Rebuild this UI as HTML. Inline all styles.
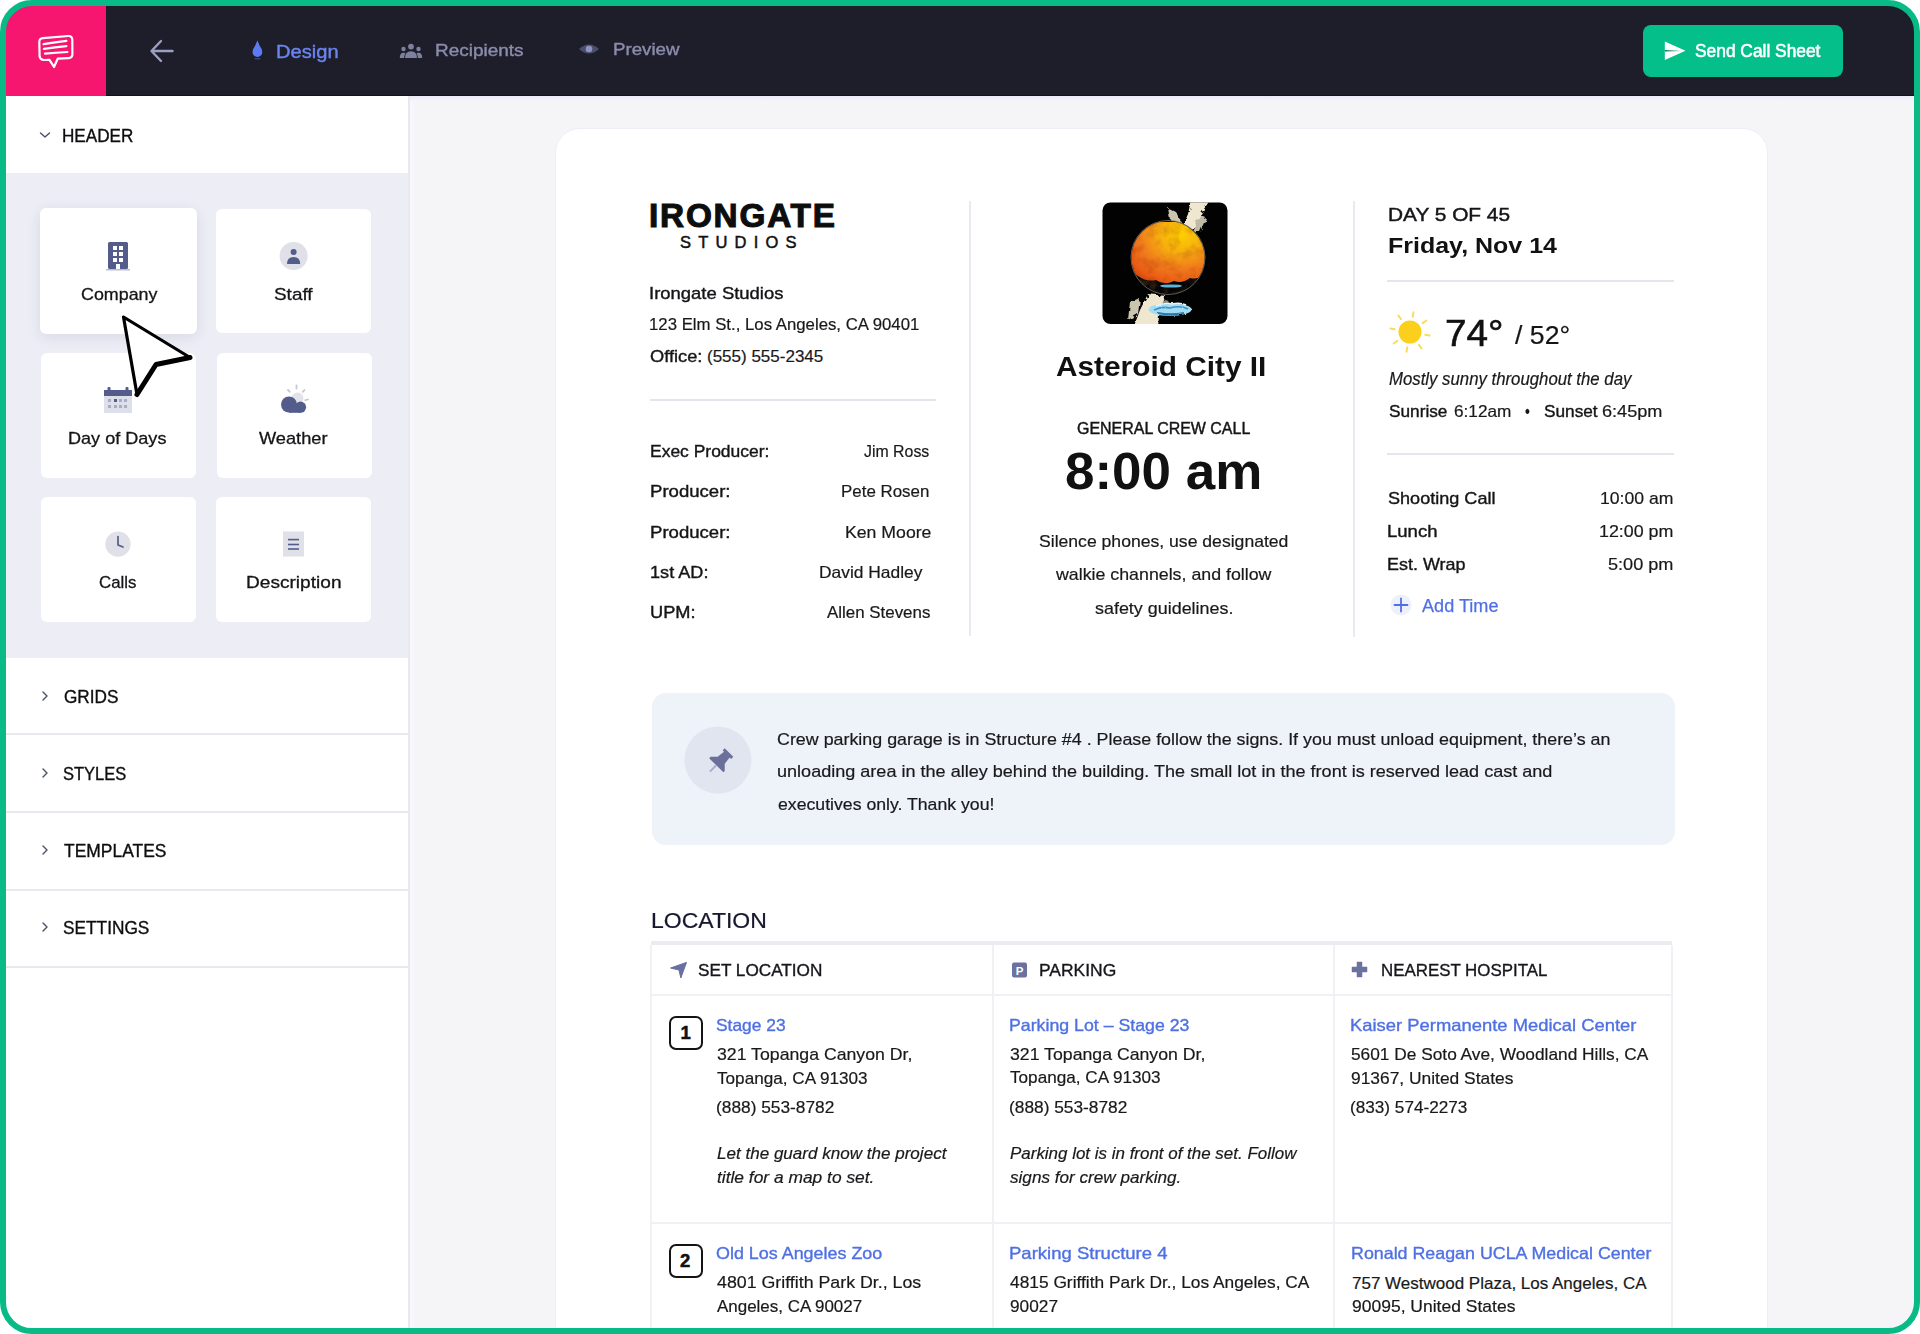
<!DOCTYPE html>
<html>
<head>
<meta charset="utf-8">
<style>
html,body{margin:0;padding:0;width:1920px;height:1334px;overflow:hidden;background:#ffffff;}
body{font-family:"Liberation Sans",sans-serif;}
#app{position:absolute;left:0;top:0;width:1920px;height:1334px;overflow:hidden;clip-path:inset(2px round 30px);background:#f5f5f8;}
.b{position:absolute;box-sizing:border-box;}
.t{position:absolute;white-space:nowrap;line-height:1;transform-origin:0 0;}
svg{position:absolute;overflow:visible;}
#frame{position:absolute;left:0;top:0;width:1920px;height:1334px;box-sizing:border-box;border:6px solid #08bb86;border-radius:32px;pointer-events:none;}
</style>
</head>
<body>
<div id="app">
<div class='b' style='left:0px;top:96px;width:408px;height:1238px;background:#ffffff;border-radius:0px;'></div>
<div class='b' style='left:408px;top:96px;width:2px;height:1238px;background:#e8e8f0;border-radius:0px;'></div>
<div class='b' style='left:410px;top:96px;width:6px;height:1238px;background:linear-gradient(90deg,#f9f8fd,#f5f5f8);border-radius:0px;'></div>
<div class='b' style='left:0px;top:173px;width:408px;height:485px;background:#ecedf5;border-radius:0px;'></div>
<div class='b' style='left:0px;top:733px;width:408px;height:2px;background:#e8e9ef;border-radius:0px;'></div>
<div class='b' style='left:0px;top:811px;width:408px;height:2px;background:#e8e9ef;border-radius:0px;'></div>
<div class='b' style='left:0px;top:889px;width:408px;height:2px;background:#e8e9ef;border-radius:0px;'></div>
<div class='b' style='left:0px;top:966px;width:408px;height:2px;background:#e8e9ef;border-radius:0px;'></div>
<div class='b' style='left:40px;top:208px;width:157px;height:126px;background:#ffffff;border-radius:6px;box-shadow:0 3px 14px rgba(40,45,80,0.10);'></div>
<div class='b' style='left:216px;top:209px;width:155px;height:124px;background:#ffffff;border-radius:6px;'></div>
<div class='b' style='left:41px;top:353px;width:155px;height:125px;background:#ffffff;border-radius:6px;'></div>
<div class='b' style='left:217px;top:353px;width:155px;height:125px;background:#ffffff;border-radius:6px;'></div>
<div class='b' style='left:41px;top:497px;width:155px;height:125px;background:#ffffff;border-radius:6px;'></div>
<div class='b' style='left:216px;top:497px;width:155px;height:125px;background:#ffffff;border-radius:6px;'></div>
<svg style='left:38px;top:128px' width='14' height='12' viewBox='0 0 14 12'><path d='M2.5 5 L7 9 L11.5 5' fill='none' stroke='#4a5160' stroke-width='1.4' stroke-linecap='round' stroke-linejoin='round'/></svg>
<svg style='left:40px;top:689px' width='10' height='14' viewBox='0 0 10 14'><path d='M3 3 L7 7 L3 11' fill='none' stroke='#4a5160' stroke-width='1.4' stroke-linecap='round' stroke-linejoin='round'/></svg>
<svg style='left:40px;top:766px' width='10' height='14' viewBox='0 0 10 14'><path d='M3 3 L7 7 L3 11' fill='none' stroke='#4a5160' stroke-width='1.4' stroke-linecap='round' stroke-linejoin='round'/></svg>
<svg style='left:40px;top:843px' width='10' height='14' viewBox='0 0 10 14'><path d='M3 3 L7 7 L3 11' fill='none' stroke='#4a5160' stroke-width='1.4' stroke-linecap='round' stroke-linejoin='round'/></svg>
<svg style='left:40px;top:920px' width='10' height='14' viewBox='0 0 10 14'><path d='M3 3 L7 7 L3 11' fill='none' stroke='#4a5160' stroke-width='1.4' stroke-linecap='round' stroke-linejoin='round'/></svg>
<svg style='left:104px;top:240px' width='30' height='32' viewBox='0 0 30 32'>
<rect x='4' y='2' width='20' height='27' rx='1.5' fill='#535c8a'/>
<rect x='9' y='6' width='4' height='4' fill='#fff'/><rect x='15' y='6' width='4' height='4' fill='#fff'/>
<rect x='9' y='12' width='4' height='4' fill='#fff'/><rect x='15' y='12' width='4' height='4' fill='#fff'/>
<rect x='9' y='18' width='4' height='4' fill='#fff'/><rect x='15' y='18' width='4' height='4' fill='#fff'/>
<rect x='12' y='24' width='4' height='5' fill='#fff'/>
<rect x='2' y='29' width='24' height='1.5' fill='#b9bfd6'/>
</svg>
<svg style='left:279px;top:242px' width='30' height='30' viewBox='0 0 30 30'>
<circle cx='14.6' cy='14' r='14' fill='#dfe0e8'/>
<circle cx='14.6' cy='10' r='3' fill='#535c8a'/>
<path d='M8 22 Q8 15 14.6 15 Q21.2 15 21.2 22 Z' fill='#535c8a'/>
</svg>
<svg style='left:103px;top:385px' width='30' height='30' viewBox='0 0 30 30'>
<rect x='1' y='5' width='28' height='23' fill='#dde0ea'/>
<rect x='1' y='5' width='28' height='6' fill='#535c8a'/>
<rect x='4.5' y='2' width='3' height='4' rx='1' fill='#535c8a'/>
<rect x='22.5' y='2' width='3' height='4' rx='1' fill='#535c8a'/>
<g fill='#a8acc4'><rect x='5' y='14' width='3' height='3'/><rect x='11' y='14' width='3' height='3' fill='#535c8a'/><rect x='16' y='14' width='3' height='3'/><rect x='21' y='14' width='3' height='3'/>
<rect x='5' y='20' width='3' height='3'/><rect x='11' y='20' width='3' height='3'/><rect x='16' y='20' width='3' height='3'/><rect x='21' y='20' width='3' height='3'/></g>
</svg>
<svg style='left:278px;top:382px' width='34' height='34' viewBox='0 0 34 34'>
<circle cx='19.5' cy='16.5' r='6' fill='#e3e4eb'/>
<g stroke='#c5c7d1' stroke-width='1.8' stroke-linecap='round'>
<line x1='18.5' y1='3.5' x2='18.5' y2='6.5'/><line x1='10' y1='8' x2='11.8' y2='9.8'/><line x1='26.5' y1='8' x2='24.8' y2='9.8'/><line x1='30' y1='17.5' x2='27.3' y2='18.2'/></g>
<g fill='#535c8a'><circle cx='11' cy='22.5' r='8'/><circle cx='22.5' cy='25.2' r='5.6'/><rect x='11' y='22' width='11.5' height='8.8'/></g>
</svg>
<svg style='left:104px;top:530px' width='28' height='28' viewBox='0 0 28 28'>
<circle cx='14' cy='14.2' r='12.6' fill='#dfe0e8'/>
<path d='M14 6.5 V15 L19 17' fill='none' stroke='#535c8a' stroke-width='1.7' stroke-linecap='round' stroke-linejoin='round'/>
</svg>
<svg style='left:282px;top:531px' width='24' height='27' viewBox='0 0 24 27'>
<rect x='1' y='0.5' width='21' height='25' fill='#dfe0e8'/>
<g stroke='#535c8a' stroke-width='1.6'><line x1='6' y1='8.6' x2='17' y2='8.6'/><line x1='6' y1='13.5' x2='17' y2='13.5'/><line x1='6' y1='18' x2='17' y2='18'/></g>
</svg>
<div class='b' style='left:0px;top:0px;width:1920px;height:96px;background:#1e1e2b;border-radius:0px;'></div>
<div class='b' style='left:0px;top:94.5px;width:1920px;height:1.5px;background:#121219;border-radius:0px;'></div>
<div class='b' style='left:0px;top:0px;width:106px;height:96px;background:#f6166f;border-radius:0px;'></div>
<svg style='left:36px;top:32px' width='40' height='40' viewBox='0 0 40 40'>
<path d='M7 6.2 Q3.2 6.5 3.3 10 L3.6 24.2 Q3.9 28 8 28 L13.5 27.8 L18 35 L21.7 26.7 L32.5 26.1 Q36.5 25.9 36.4 22 L36.3 7.6 Q36.2 3.9 32.4 4 Z' fill='none' stroke='#fff' stroke-width='2.2' stroke-linejoin='round'/>
<g stroke='#fff' stroke-width='2.2' stroke-linecap='round' fill='none'>
<path d='M7.6 12.2 Q19 10.2 30.4 8.8'/><path d='M7.9 16.8 Q19 15.1 30.4 14.1'/><path d='M9 21.6 Q20 20.6 31.4 20'/></g>
</svg>
<svg style='left:148px;top:38px' width='28' height='26' viewBox='0 0 28 26'>
<g fill='none' stroke='#9c9ec2' stroke-width='2.4' stroke-linecap='round' stroke-linejoin='round'>
<path d='M13 3 L3.5 13 L13 23'/><path d='M4.5 13 H24.5'/></g>
</svg>
<svg style='left:249px;top:38px' width='16' height='24' viewBox='0 0 16 24'>
<path d='M8.4 2.5 Q6.8 6 6 8 Q3.5 11 3.5 14 A4.9 4.9 0 0 0 13.3 14 Q13.3 11 10.8 8 Q10 6 8.4 2.5 Z' fill='#5d7af5'/>
<rect x='5.5' y='20' width='6' height='1.5' rx='0.7' fill='#3b4470'/>
</svg>
<svg style='left:399px;top:42.5px' width='26' height='18' viewBox='0 0 26 18'>
<g fill='#7e809f'>
<circle cx='12' cy='3.6' r='2.9'/><circle cx='4.5' cy='6' r='2.2'/><circle cx='19.5' cy='6' r='2.2'/>
<path d='M6 15 Q6 8.3 12 8.3 Q18 8.3 18 15 Z'/>
<path d='M0.8 15 Q0.8 9.8 4.6 9.8 Q6 9.8 6.5 10.3 Q5 12.2 5 15 Z'/>
<path d='M23.2 15 Q23.2 9.8 19.4 9.8 Q18 9.8 17.5 10.3 Q19 12.2 19 15 Z'/></g>
</svg>
<svg style='left:577px;top:41px' width='24' height='16' viewBox='0 0 24 16'>
<path d='M2 8 Q12 -1 22 8 Q12 17 2 8 Z' fill='#4b4e6a'/>
<circle cx='12' cy='8' r='3.3' fill='#8e93c0'/>
</svg>
<div class='b' style='left:1643px;top:25px;width:200px;height:52px;background:#04bf8a;border-radius:8px;'></div>
<svg style='left:1662px;top:40px' width='26' height='22' viewBox='0 0 26 22'>
<defs><linearGradient id='pl' gradientUnits='userSpaceOnUse' x1='2.8' y1='0' x2='19.5' y2='0'><stop offset='0' stop-color='#0a7f5a'/><stop offset='1' stop-color='#ffffff'/></linearGradient></defs>
<path d='M2.8 1.6 L23.5 10.8 L2.8 20 Z' fill='#fff'/>
<path d='M2.8 10.8 H19.5' stroke='url(#pl)' stroke-width='1.4'/>
</svg>
<div class='b' style='left:555px;top:128px;width:1213px;height:1302px;background:#ffffff;border-radius:25px;border:1px solid #eceef5;'></div>
<div class='b' style='left:410px;top:96px;width:1504px;height:5px;background:linear-gradient(#eceaf6,#f5f5f8);border-radius:0px;'></div>
<div class='b' style='left:650px;top:399px;width:286px;height:2px;background:#e4e6ed;border-radius:0px;'></div>
<div class='b' style='left:968.5px;top:201px;width:2px;height:435px;background:#e9eaf1;border-radius:0px;'></div>
<div class='b' style='left:1352.5px;top:201px;width:2px;height:436px;background:#e9eaf1;border-radius:0px;'></div>
<div class='b' style='left:1387px;top:279.5px;width:287px;height:2px;background:#e4e6ed;border-radius:0px;'></div>
<div class='b' style='left:1387px;top:453px;width:287px;height:2px;background:#e4e6ed;border-radius:0px;'></div>
<div class='t' style='left:649px;top:198.5px;font-size:33.3px;font-weight:700;color:#0d0d0d;letter-spacing:1.8px;-webkit-text-stroke:1.1px #0d0d0d;'>IRONGATE</div>
<div class='t' style='left:680px;top:234px;font-size:16.5px;font-weight:400;color:#111;-webkit-text-stroke:0.5px #111;letter-spacing:7.2px;'>STUDIOS</div>
<svg style='left:1102px;top:202px' width='126' height='122' viewBox='0 0 126 122'>
<defs>
<radialGradient id='pg' cx='0.68' cy='0.2' r='0.95'>
<stop offset='0' stop-color='#fcd000'/><stop offset='0.3' stop-color='#f7b00e'/><stop offset='0.6' stop-color='#f07a1c'/><stop offset='0.85' stop-color='#e95a14'/><stop offset='1' stop-color='#b83c0c'/></radialGradient>
<clipPath id='pc'><rect x='0.5' y='0.5' width='125' height='121.5' rx='8'/></clipPath>
<clipPath id='planet'><circle cx='66' cy='55.5' r='36.5'/></clipPath>
<filter id='rough' x='-20%' y='-20%' width='140%' height='140%'><feTurbulence type='fractalNoise' baseFrequency='0.18' numOctaves='2' seed='3'/><feDisplacementMap in='SourceGraphic' scale='6'/></filter>
<filter id='mott'><feTurbulence type='fractalNoise' baseFrequency='0.09' numOctaves='3' seed='7'/><feColorMatrix values='0 0 0 0 0.45  0 0 0 0 0.15  0 0 0 0 0.02  0 0 0 -2.2 1.25'/></filter>
</defs>
<g clip-path='url(#pc)'>
<rect x='0' y='0' width='126' height='122' fill='#020202'/>
<g filter='url(#rough)' fill='#efe7cf'>
<path d='M89 -2 L108 -2 L100 10 L92 24 L84 32 L80 26 L86 12 Z'/>
<path d='M66 6 L74 10 L80 22 L74 28 L68 18 Z' opacity='0.85'/>
<path d='M96 12 L104 16 L98 30 L90 30 Z' opacity='0.8'/>
<path d='M46 92 L64 94 L58 106 L56 124 L32 124 L38 108 Z'/>
<path d='M28 100 L38 96 L36 112 L26 118 Z' opacity='0.85'/>
<path d='M60 98 L68 100 L64 112 L58 110 Z' opacity='0.6'/>
</g>
<circle cx='66' cy='55.5' r='37' fill='#050505' stroke='#6d6a66' stroke-width='0.9'/>
<g clip-path='url(#planet)'>
<path d='M28 20 L104 20 L104 72 Q96 78 88 76 Q80 82 72 79 Q62 84 54 78 Q44 80 36 74 L28 70 Z' fill='url(#pg)'/>
<rect x='28' y='18' width='80' height='66' fill='#000' filter='url(#mott)' opacity='0.35' style='mix-blend-mode:multiply'/>
</g>
<ellipse cx='69' cy='84' rx='11' ry='1.6' fill='#5fb4dc'/>
<filter id='rough2' x='-20%' y='-50%' width='140%' height='200%'><feTurbulence type='fractalNoise' baseFrequency='0.35' numOctaves='1' seed='5'/><feDisplacementMap in='SourceGraphic' scale='2.5'/></filter>
<g filter='url(#rough2)'>
<ellipse cx='68' cy='107.5' rx='21.5' ry='6.3' fill='#a3dcf0'/>
<path d='M52 108 Q60 104 68 106 Q78 103 86 107' stroke='#3f93c6' stroke-width='1.6' fill='none'/>
<path d='M54 104 Q62 100 70 102 Q78 100 84 103' stroke='#e8f7fc' stroke-width='1.4' fill='none'/>
<path d='M56 111 Q68 113.5 82 111' stroke='#2a78b0' stroke-width='2' fill='none'/>
</g>
</g>
</svg>
<svg style='left:1389px;top:310.5px' width='42' height='42' viewBox='0 0 42 42'>
<circle cx='21' cy='21' r='11.5' fill='#fbcf1c'/>
<g stroke='#f8dc60' stroke-width='2' stroke-linecap='round'><line x1='36.3' y1='23.7' x2='40.7' y2='24.5'/><line x1='29.9' y1='33.7' x2='32.5' y2='37.4'/><line x1='18.3' y1='36.3' x2='17.5' y2='40.7'/><line x1='8.3' y1='29.9' x2='4.6' y2='32.5'/><line x1='5.7' y1='18.3' x2='1.3' y2='17.5'/><line x1='12.1' y1='8.3' x2='9.5' y2='4.6'/><line x1='23.7' y1='5.7' x2='24.5' y2='1.3'/><line x1='33.7' y1='12.1' x2='37.4' y2='9.5'/></g>
</svg>
<svg style='left:1390px;top:594px' width='22' height='22' viewBox='0 0 22 22'>
<circle cx='11' cy='11' r='10.5' fill='#eef1fb'/>
<g stroke='#4f70e3' stroke-width='1.8' stroke-linecap='round'><line x1='11' y1='4.5' x2='11' y2='17.5'/><line x1='4.5' y1='11' x2='17.5' y2='11'/></g>
</svg>
<div class='b' style='left:652px;top:693px;width:1023px;height:152px;background:#eef2f9;border-radius:14px;'></div>
<svg style='left:684px;top:726px' width='68' height='68' viewBox='0 0 68 68'>
<circle cx='34' cy='34' r='33.5' fill='#e1e5ef'/>
<g transform='translate(36.5 35) rotate(45)'>
<path d='M-6 -12 H6 V-9 H4 L5 -1 L10 4 V6 H-10 V4 L-5 -1 L-4 -9 H-6 Z' fill='#6a7099'/>
<rect x='-1' y='6' width='2' height='9' fill='#a9aecb'/>
</g>
</svg>
<div class='b' style='left:651px;top:941px;width:1021px;height:4px;background:#ebecf2;border-radius:0px;'></div>
<div class='b' style='left:650px;top:945px;width:2px;height:400px;background:#f0f1f5;border-radius:0px;'></div>
<div class='b' style='left:992px;top:945px;width:2px;height:400px;background:#f0f1f5;border-radius:0px;'></div>
<div class='b' style='left:1333px;top:945px;width:2px;height:400px;background:#f0f1f5;border-radius:0px;'></div>
<div class='b' style='left:1671px;top:945px;width:2px;height:400px;background:#f0f1f5;border-radius:0px;'></div>
<div class='b' style='left:651px;top:994px;width:1021px;height:2px;background:#f0f1f5;border-radius:0px;'></div>
<div class='b' style='left:651px;top:1222px;width:1021px;height:2px;background:#f0f1f5;border-radius:0px;'></div>
<div class='b' style='left:668.5px;top:1015.5px;width:34.5px;height:34px;background:transparent;border-radius:7px;border:2px solid #141414;'></div>
<div class='b' style='left:668.5px;top:1244px;width:34.5px;height:34px;background:transparent;border-radius:7px;border:2px solid #141414;'></div>
<svg style='left:668px;top:960px' width='22' height='22' viewBox='0 0 22 22'><path d='M2.6 8 L18.5 2.4 L12.8 18 L11 10 Z' fill='#6770a0' stroke='#6770a0' stroke-width='1' stroke-linejoin='round'/></svg>
<svg style='left:1011px;top:961px' width='18' height='18' viewBox='0 0 18 18'>
<rect x='1' y='1.5' width='15' height='15' rx='2' fill='#6b72a0'/>
<text x='8.5' y='13.6' font-family='Liberation Sans' font-weight='700' font-size='11.5' fill='#fff' text-anchor='middle'>P</text>
</svg>
<svg style='left:1350px;top:960px' width='20' height='20' viewBox='0 0 20 20'><path d='M7 2 H12 V7 H17 V12 H12 V17 H7 V12 H2 V7 H7 Z' fill='#6b72a0' stroke='#6b72a0' stroke-width='0.5' stroke-linejoin='round'/></svg>
<div class='t' id='t0' style='left:276.00px;top:43.04px;font-size:18.5px;font-weight:400;color:#6b86f2;-webkit-text-stroke:0.38px #6b86f2;transform:scaleX(1.0871);'>Design</div>
<div class='t' id='t1' style='left:435.00px;top:43.25px;font-size:16.6px;font-weight:400;color:#8b8dac;-webkit-text-stroke:0.38px #8b8dac;transform:scaleX(1.1424);'>Recipients</div>
<div class='t' id='t2' style='left:613.01px;top:42.45px;font-size:16.6px;font-weight:400;color:#8b8dac;-webkit-text-stroke:0.38px #8b8dac;transform:scaleX(1.1267);'>Preview</div>
<div class='t' id='t3' style='left:1695.00px;top:42.26px;font-size:18px;font-weight:400;color:#ffffff;-webkit-text-stroke:0.55px #ffffff;transform:scaleX(0.9641);'>Send Call Sheet</div>
<div class='t' id='t4' style='left:62.01px;top:127.69px;font-size:17.5px;font-weight:400;color:#0e0e10;-webkit-text-stroke:0.35px #0e0e10;transform:scaleX(0.9786);'>HEADER</div>
<div class='t' id='t5' style='left:81.00px;top:286.11px;font-size:17px;font-weight:400;color:#151518;-webkit-text-stroke:0.3px #151518;transform:scaleX(1.0510);'>Company</div>
<div class='t' id='t6' style='left:274.04px;top:286.11px;font-size:17px;font-weight:400;color:#151518;-webkit-text-stroke:0.3px #151518;transform:scaleX(1.1131);'>Staff</div>
<div class='t' id='t7' style='left:68.00px;top:430.31px;font-size:17px;font-weight:400;color:#151518;-webkit-text-stroke:0.3px #151518;transform:scaleX(1.0632);'>Day of Days</div>
<div class='t' id='t8' style='left:259.01px;top:430.31px;font-size:17px;font-weight:400;color:#151518;-webkit-text-stroke:0.3px #151518;transform:scaleX(1.0713);'>Weather</div>
<div class='t' id='t9' style='left:99.01px;top:573.51px;font-size:17px;font-weight:400;color:#151518;-webkit-text-stroke:0.3px #151518;transform:scaleX(0.9887);'>Calls</div>
<div class='t' id='t10' style='left:245.99px;top:573.51px;font-size:17px;font-weight:400;color:#151518;-webkit-text-stroke:0.3px #151518;transform:scaleX(1.1233);'>Description</div>
<div class='t' id='t11' style='left:63.61px;top:688.99px;font-size:17.5px;font-weight:400;color:#0e0e10;-webkit-text-stroke:0.35px #0e0e10;transform:scaleX(0.9811);'>GRIDS</div>
<div class='t' id='t12' style='left:62.60px;top:766.29px;font-size:17.5px;font-weight:400;color:#0e0e10;-webkit-text-stroke:0.35px #0e0e10;transform:scaleX(0.9433);'>STYLES</div>
<div class='t' id='t13' style='left:63.60px;top:843.49px;font-size:17.5px;font-weight:400;color:#0e0e10;-webkit-text-stroke:0.35px #0e0e10;transform:scaleX(0.9965);'>TEMPLATES</div>
<div class='t' id='t14' style='left:62.60px;top:919.79px;font-size:17.5px;font-weight:400;color:#0e0e10;-webkit-text-stroke:0.35px #0e0e10;transform:scaleX(0.9870);'>SETTINGS</div>
<div class='t' id='t15' style='left:649.00px;top:284.61px;font-size:17px;font-weight:400;color:#151518;-webkit-text-stroke:0.38px #151518;transform:scaleX(1.0861);'>Irongate Studios</div>
<div class='t' id='t16' style='left:649.00px;top:316.21px;font-size:17px;font-weight:400;color:#19191c;-webkit-text-stroke:0.2px #19191c;transform:scaleX(0.9864);'>123 Elm St., Los Angeles, CA 90401</div>
<div class='t' id='t17' style='left:650.00px;top:347.51px;font-size:17px;font-weight:400;color:#151518;-webkit-text-stroke:0.38px #151518;transform:scaleX(1.0744);'>Office:</div>
<div class='t' id='t18' style='left:707.00px;top:347.51px;font-size:17px;font-weight:400;color:#19191c;-webkit-text-stroke:0.2px #19191c;'>(555) 555-2345</div>
<div class='t' id='t19' style='left:649.99px;top:443.03px;font-size:16.5px;font-weight:400;color:#151518;-webkit-text-stroke:0.38px #151518;transform:scaleX(1.0584);'>Exec Producer:</div>
<div class='t' id='t20' style='left:864.00px;top:443.03px;font-size:16.5px;font-weight:400;color:#19191c;-webkit-text-stroke:0.2px #19191c;transform:scaleX(0.9623);'>Jim Ross</div>
<div class='t' id='t21' style='left:649.99px;top:483.43px;font-size:16.5px;font-weight:400;color:#151518;-webkit-text-stroke:0.38px #151518;transform:scaleX(1.1250);'>Producer:</div>
<div class='t' id='t22' style='left:841.00px;top:483.43px;font-size:16.5px;font-weight:400;color:#19191c;-webkit-text-stroke:0.2px #19191c;transform:scaleX(1.0246);'>Pete Rosen</div>
<div class='t' id='t23' style='left:649.99px;top:523.73px;font-size:16.5px;font-weight:400;color:#151518;-webkit-text-stroke:0.38px #151518;transform:scaleX(1.1250);'>Producer:</div>
<div class='t' id='t24' style='left:845.01px;top:523.73px;font-size:16.5px;font-weight:400;color:#19191c;-webkit-text-stroke:0.2px #19191c;transform:scaleX(1.0706);'>Ken Moore</div>
<div class='t' id='t25' style='left:649.99px;top:564.03px;font-size:16.5px;font-weight:400;color:#151518;-webkit-text-stroke:0.38px #151518;transform:scaleX(1.0988);'>1st AD:</div>
<div class='t' id='t26' style='left:819.01px;top:564.03px;font-size:16.5px;font-weight:400;color:#19191c;-webkit-text-stroke:0.2px #19191c;transform:scaleX(1.0536);'>David Hadley</div>
<div class='t' id='t27' style='left:649.98px;top:604.03px;font-size:16.5px;font-weight:400;color:#151518;-webkit-text-stroke:0.38px #151518;transform:scaleX(1.1031);'>UPM:</div>
<div class='t' id='t28' style='left:827.00px;top:604.03px;font-size:16.5px;font-weight:400;color:#19191c;-webkit-text-stroke:0.2px #19191c;transform:scaleX(1.0243);'>Allen Stevens</div>
<div class='t' id='t29' style='left:1056.00px;top:352.37px;font-size:28.5px;font-weight:700;color:#111;transform:scaleX(1.0460);'>Asteroid City II</div>
<div class='t' id='t30' style='left:1077.00px;top:420.03px;font-size:16.5px;font-weight:400;color:#151518;-webkit-text-stroke:0.45px #151518;transform:scaleX(0.9675);'>GENERAL CREW CALL</div>
<div class='t' id='t31' style='left:1065.40px;top:446.01px;font-size:51.5px;font-weight:700;color:#111;transform:scaleX(1.0282);'>8:00 am</div>
<div class='t' id='t32' style='left:1039.00px;top:532.61px;font-size:17px;font-weight:400;color:#19191c;-webkit-text-stroke:0.2px #19191c;transform:scaleX(1.0348);'>Silence phones, use designated</div>
<div class='t' id='t33' style='left:1056.00px;top:565.61px;font-size:17px;font-weight:400;color:#19191c;-webkit-text-stroke:0.2px #19191c;transform:scaleX(1.0457);'>walkie channels, and follow</div>
<div class='t' id='t34' style='left:1095.40px;top:599.61px;font-size:17px;font-weight:400;color:#19191c;-webkit-text-stroke:0.2px #19191c;transform:scaleX(1.0537);'>safety guidelines.</div>
<div class='t' id='t35' style='left:1388.00px;top:206.34px;font-size:18.5px;font-weight:400;color:#151518;-webkit-text-stroke:0.45px #151518;transform:scaleX(1.1270);'>DAY 5 OF 45</div>
<div class='t' id='t36' style='left:1388.01px;top:234.88px;font-size:22px;font-weight:700;color:#111;transform:scaleX(1.1361);'>Friday, Nov 14</div>
<div class='t' id='t37' style='left:1445.00px;top:316.43px;font-size:36px;font-weight:400;color:#111;-webkit-text-stroke:0.6px #111;transform:scaleX(1.0743);'>74°</div>
<div class='t' id='t38' style='left:1515.00px;top:321.99px;font-size:26px;font-weight:400;color:#151518;-webkit-text-stroke:0.2px #151518;transform:scaleX(1.0258);'>/ 52°</div>
<div class='t' id='t39' style='left:1389.00px;top:370.99px;font-size:17.5px;font-weight:400;color:#19191c;font-style:italic;-webkit-text-stroke:0.2px #19191c;transform:scaleX(0.9582);'>Mostly sunny throughout the day</div>
<div class='t' id='t40' style='left:1389.00px;top:403.23px;font-size:16.5px;font-weight:400;color:#151518;-webkit-text-stroke:0.38px #151518;transform:scaleX(1.0441);'>Sunrise</div>
<div class='t' id='t41' style='left:1454.00px;top:403.23px;font-size:16.5px;font-weight:400;color:#19191c;-webkit-text-stroke:0.2px #19191c;transform:scaleX(1.0425);'>6:12am</div>
<div class='t' id='t42' style='left:1525.45px;top:402.42px;font-size:19px;font-weight:400;color:#151518;-webkit-text-stroke:0.2px #151518;transform:scaleX(0.7264);'>•</div>
<div class='t' id='t43' style='left:1544.00px;top:403.23px;font-size:16.5px;font-weight:400;color:#151518;-webkit-text-stroke:0.38px #151518;transform:scaleX(1.0443);'>Sunset</div>
<div class='t' id='t44' style='left:1601.98px;top:403.23px;font-size:16.5px;font-weight:400;color:#19191c;-webkit-text-stroke:0.2px #19191c;transform:scaleX(1.0983);'>6:45pm</div>
<div class='t' id='t45' style='left:1388.00px;top:490.31px;font-size:17px;font-weight:400;color:#151518;-webkit-text-stroke:0.38px #151518;transform:scaleX(1.0626);'>Shooting Call</div>
<div class='t' id='t46' style='left:1599.79px;top:490.31px;font-size:17px;font-weight:400;color:#19191c;-webkit-text-stroke:0.2px #19191c;transform:scaleX(1.0355);'>10:00 am</div>
<div class='t' id='t47' style='left:1387.00px;top:523.11px;font-size:17px;font-weight:400;color:#151518;-webkit-text-stroke:0.38px #151518;transform:scaleX(1.0897);'>Lunch</div>
<div class='t' id='t48' style='left:1598.77px;top:523.11px;font-size:17px;font-weight:400;color:#19191c;-webkit-text-stroke:0.2px #19191c;transform:scaleX(1.0499);'>12:00 pm</div>
<div class='t' id='t49' style='left:1387.00px;top:555.91px;font-size:17px;font-weight:400;color:#151518;-webkit-text-stroke:0.38px #151518;transform:scaleX(1.0553);'>Est. Wrap</div>
<div class='t' id='t50' style='left:1607.75px;top:555.91px;font-size:17px;font-weight:400;color:#19191c;-webkit-text-stroke:0.2px #19191c;transform:scaleX(1.0653);'>5:00 pm</div>
<div class='t' id='t51' style='left:1422.01px;top:597.59px;font-size:17.5px;font-weight:400;color:#4f70e3;-webkit-text-stroke:0.25px #4f70e3;transform:scaleX(1.0341);'>Add Time</div>
<div class='t' id='t52' style='left:777.00px;top:731.55px;font-size:16.6px;font-weight:400;color:#19191c;-webkit-text-stroke:0.2px #19191c;transform:scaleX(1.0761);'>Crew parking garage is in Structure #4 . Please follow the signs. If you must unload equipment, there’s an</div>
<div class='t' id='t53' style='left:777.00px;top:764.45px;font-size:16.6px;font-weight:400;color:#19191c;-webkit-text-stroke:0.2px #19191c;transform:scaleX(1.0879);'>unloading area in the alley behind the building. The small lot in the front is reserved lead cast and</div>
<div class='t' id='t54' style='left:778.00px;top:797.35px;font-size:16.6px;font-weight:400;color:#19191c;-webkit-text-stroke:0.2px #19191c;transform:scaleX(1.0649);'>executives only. Thank you!</div>
<div class='t' id='t55' style='left:650.99px;top:909.78px;font-size:22px;font-weight:400;color:#17172e;-webkit-text-stroke:0.2px #17172e;transform:scaleX(1.0453);'>LOCATION</div>
<div class='t' id='t56' style='left:698.00px;top:962.03px;font-size:16.5px;font-weight:400;color:#16161c;-webkit-text-stroke:0.35px #16161c;transform:scaleX(1.0408);'>SET LOCATION</div>
<div class='t' id='t57' style='left:1039.00px;top:962.03px;font-size:16.5px;font-weight:400;color:#16161c;-webkit-text-stroke:0.35px #16161c;transform:scaleX(1.0568);'>PARKING</div>
<div class='t' id='t58' style='left:1381.01px;top:962.03px;font-size:16.5px;font-weight:400;color:#16161c;-webkit-text-stroke:0.35px #16161c;transform:scaleX(1.0231);'>NEAREST HOSPITAL</div>
<div class='t' id='t59' style='left:680.50px;top:1023.84px;font-size:18.5px;font-weight:700;color:#111;-webkit-text-stroke:0.5px #111;'>1</div>
<div class='t' id='t60' style='left:680.00px;top:1252.34px;font-size:18.5px;font-weight:700;color:#111;-webkit-text-stroke:0.5px #111;'>2</div>
<div class='t' id='t61' style='left:716.00px;top:1017.03px;font-size:16.5px;font-weight:400;color:#4f70e3;-webkit-text-stroke:0.35px #4f70e3;transform:scaleX(1.0535);'>Stage 23</div>
<div class='t' id='t62' style='left:717.00px;top:1046.11px;font-size:17px;font-weight:400;color:#19191c;-webkit-text-stroke:0.2px #19191c;transform:scaleX(1.0407);'>321 Topanga Canyon Dr,</div>
<div class='t' id='t63' style='left:717.00px;top:1069.61px;font-size:17px;font-weight:400;color:#19191c;-webkit-text-stroke:0.2px #19191c;transform:scaleX(1.0082);'>Topanga, CA 91303</div>
<div class='t' id='t64' style='left:716.00px;top:1098.61px;font-size:17px;font-weight:400;color:#19191c;-webkit-text-stroke:0.2px #19191c;transform:scaleX(1.0182);'>(888) 553-8782</div>
<div class='t' id='t65' style='left:717.20px;top:1145.01px;font-size:17px;font-weight:400;color:#19191c;font-style:italic;-webkit-text-stroke:0.2px #19191c;transform:scaleX(1.0030);'>Let the guard know the project</div>
<div class='t' id='t66' style='left:717.20px;top:1169.41px;font-size:17px;font-weight:400;color:#19191c;font-style:italic;-webkit-text-stroke:0.2px #19191c;transform:scaleX(1.0219);'>title for a map to set.</div>
<div class='t' id='t67' style='left:1009.00px;top:1016.53px;font-size:16.5px;font-weight:400;color:#4f70e3;-webkit-text-stroke:0.35px #4f70e3;transform:scaleX(1.0747);'>Parking Lot – Stage 23</div>
<div class='t' id='t68' style='left:1010.00px;top:1046.11px;font-size:17px;font-weight:400;color:#19191c;-webkit-text-stroke:0.2px #19191c;transform:scaleX(1.0407);'>321 Topanga Canyon Dr,</div>
<div class='t' id='t69' style='left:1010.00px;top:1069.31px;font-size:17px;font-weight:400;color:#19191c;-webkit-text-stroke:0.2px #19191c;transform:scaleX(1.0082);'>Topanga, CA 91303</div>
<div class='t' id='t70' style='left:1009.00px;top:1098.61px;font-size:17px;font-weight:400;color:#19191c;-webkit-text-stroke:0.2px #19191c;transform:scaleX(1.0182);'>(888) 553-8782</div>
<div class='t' id='t71' style='left:1010.00px;top:1145.01px;font-size:17px;font-weight:400;color:#19191c;font-style:italic;-webkit-text-stroke:0.2px #19191c;transform:scaleX(0.9970);'>Parking lot is in front of the set. Follow</div>
<div class='t' id='t72' style='left:1010.00px;top:1169.41px;font-size:17px;font-weight:400;color:#19191c;font-style:italic;-webkit-text-stroke:0.2px #19191c;transform:scaleX(1.0077);'>signs for crew parking.</div>
<div class='t' id='t73' style='left:1350.00px;top:1017.23px;font-size:16.5px;font-weight:400;color:#4f70e3;-webkit-text-stroke:0.35px #4f70e3;transform:scaleX(1.1156);'>Kaiser Permanente Medical Center</div>
<div class='t' id='t74' style='left:1351.00px;top:1046.11px;font-size:17px;font-weight:400;color:#19191c;-webkit-text-stroke:0.2px #19191c;transform:scaleX(1.0173);'>5601 De Soto Ave, Woodland Hills, CA</div>
<div class='t' id='t75' style='left:1351.01px;top:1070.11px;font-size:17px;font-weight:400;color:#19191c;-webkit-text-stroke:0.2px #19191c;transform:scaleX(1.0228);'>91367, United States</div>
<div class='t' id='t76' style='left:1350.01px;top:1099.31px;font-size:17px;font-weight:400;color:#19191c;-webkit-text-stroke:0.2px #19191c;transform:scaleX(1.0096);'>(833) 574-2273</div>
<div class='t' id='t77' style='left:716.00px;top:1244.53px;font-size:16.5px;font-weight:400;color:#4f70e3;-webkit-text-stroke:0.35px #4f70e3;transform:scaleX(1.0852);'>Old Los Angeles Zoo</div>
<div class='t' id='t78' style='left:717.00px;top:1274.41px;font-size:17px;font-weight:400;color:#19191c;-webkit-text-stroke:0.2px #19191c;transform:scaleX(1.0458);'>4801 Griffith Park Dr., Los</div>
<div class='t' id='t79' style='left:717.00px;top:1298.11px;font-size:17px;font-weight:400;color:#19191c;-webkit-text-stroke:0.2px #19191c;transform:scaleX(0.9973);'>Angeles, CA 90027</div>
<div class='t' id='t80' style='left:1009.00px;top:1244.53px;font-size:16.5px;font-weight:400;color:#4f70e3;-webkit-text-stroke:0.35px #4f70e3;transform:scaleX(1.1221);'>Parking Structure 4</div>
<div class='t' id='t81' style='left:1010.00px;top:1274.41px;font-size:17px;font-weight:400;color:#19191c;-webkit-text-stroke:0.2px #19191c;transform:scaleX(1.0199);'>4815 Griffith Park Dr., Los Angeles, CA</div>
<div class='t' id='t82' style='left:1010.00px;top:1298.11px;font-size:17px;font-weight:400;color:#19191c;-webkit-text-stroke:0.2px #19191c;transform:scaleX(1.0151);'>90027</div>
<div class='t' id='t83' style='left:1351.00px;top:1244.83px;font-size:16.5px;font-weight:400;color:#4f70e3;-webkit-text-stroke:0.35px #4f70e3;transform:scaleX(1.0810);'>Ronald Reagan UCLA Medical Center</div>
<div class='t' id='t84' style='left:1352.00px;top:1274.81px;font-size:17px;font-weight:400;color:#19191c;-webkit-text-stroke:0.2px #19191c;'>757 Westwood Plaza, Los Angeles, CA</div>
<div class='t' id='t85' style='left:1352.00px;top:1297.91px;font-size:17px;font-weight:400;color:#19191c;-webkit-text-stroke:0.2px #19191c;transform:scaleX(1.0291);'>90095, United States</div>
<svg style='left:110px;top:305px' width='100' height='100' viewBox='0 0 100 100'>
<path d='M13.5 12 L80 52.5 L46 59.5 L27 89.5 Z' fill='#fff' stroke='#000' stroke-width='3.2' stroke-linejoin='round'/>
<path d='M80 52.5 L46 59.5 L27 89.5' fill='none' stroke='#000' stroke-width='5' stroke-linejoin='round' stroke-linecap='round'/>
</svg>
</div>
<div id="frame"></div>
</body>
</html>
